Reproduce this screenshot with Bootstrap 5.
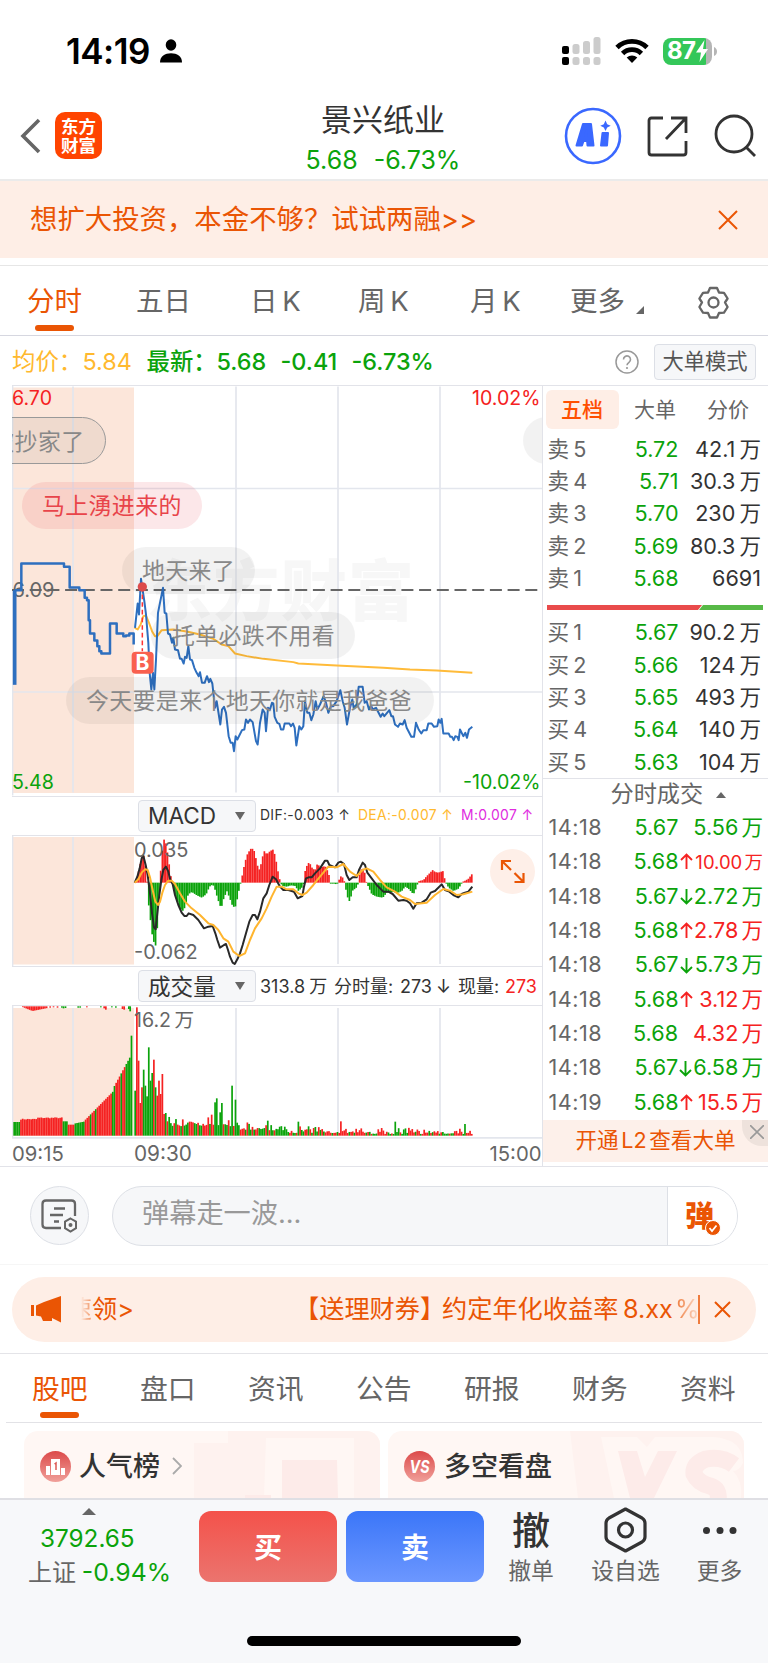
<!DOCTYPE html>
<html lang="zh-CN">
<head>
<meta charset="utf-8">
<meta name="viewport" content="width=device-width, initial-scale=1">
<title>景兴纸业</title>
<link href="https://cdn.jsdelivr.net/npm/bootstrap@5.3.0/dist/css/bootstrap.min.css" rel="stylesheet">
<style>
:root{--or:#ea5504;--gn:#0ba30b;--rd:#f52222;--ln:#e2e3e9;--tx:#333;--gy:#666;--peach:#feeee6}
body{font-family:Inter,"Noto Sans CJK SC",sans-serif;color:var(--tx);background:#fff;line-height:1;width:768px;height:1663px;overflow:hidden}
.t-or{color:var(--or)}.t-gn{color:var(--gn)}.t-rd{color:var(--rd)}.t-gy{color:var(--gy)}.t-ye{color:#ffb92e}
.nw,.nw *{white-space:nowrap}
svg{display:block;flex:none}
.statusbar{height:80px;padding:21px 51px 0 66px}
.clock{font-size:35px;font-weight:600;color:#000;letter-spacing:-.5px}
.battery{width:49px;height:27px;border-radius:8px;background:linear-gradient(90deg,#34c759 87%,#b5b5b5 87%);color:#fff;font-weight:700;font-size:24px;padding-left:4px;letter-spacing:-.5px}
.topbar{height:101px;border-bottom:2px solid #ebebeb}
.logo{width:47px;height:47px;border-radius:10px;background:#ff4400;color:#fff;font-size:17.5px;font-weight:700;line-height:19px}
.stock{font-size:31px;line-height:34px}
.quote{font-size:25px;line-height:28px}
.banner{height:77px;background:var(--peach);font-size:27.4px}
.periods{height:71px;margin-top:7px;border-top:1px solid #e6e6e6;border-bottom:1.5px solid #d6d7e0;font-size:27.5px;color:var(--gy);padding-top:3px;word-spacing:-3px}
.on{position:relative;display:inline-block;color:var(--or)}
.on::after{content:"";position:absolute;left:50%;bottom:-15px;width:39px;height:6px;margin-left:-19.5px;border-radius:3px;background:var(--or)}
.info{height:49px;font-size:23.4px;padding-top:2px}
.mode{width:102px;height:36px;border:1px solid #dcdfe6;background:#f6f7f9;border-radius:4px;font-size:21.3px;color:#555}
.market{height:782px;border-bottom:1px solid var(--ln)}
.charts{width:530.5px;margin-left:12px;border-right:1.5px solid var(--ln)}
.plot{position:relative;overflow:hidden;border-top:1.5px solid var(--ln)}
.lbl{position:absolute;font-size:19.6px;line-height:20px;word-spacing:-2px}
.bub{position:absolute;height:47px;line-height:48px;border-radius:24px;background:rgba(0,0,0,.05);color:#888;font-size:22.9px;letter-spacing:.4px;white-space:nowrap}
.subhead{height:39px;border-top:1.5px solid var(--ln);padding-left:126px}
.pick{width:118px;height:32px;border:1px solid #dcdfe6;background:#f6f7f9;border-radius:4px;font-size:22.6px;padding:0 10px 0 9px}
.tri-d{border:5px solid transparent;border-top:8px solid #666;border-bottom:0}
.tri-u{border:5.5px solid transparent;border-bottom:6.5px solid #666;border-top:0}
.depth{width:225.5px;border-top:1.5px solid var(--ln);position:relative}
.dtab{width:73px;height:39px;font-size:21px;color:var(--gy);border-radius:6px;padding-top:1px}
.dtab.act{background:var(--peach);color:#ff5000;font-weight:500}
.lv{height:32.3px;font-size:21.6px;padding:0 7px 0 5px;word-spacing:-2px}
.lv>:nth-child(1),.tk>:nth-child(1){width:60px;color:var(--gy)}
.lv>:nth-child(2){width:71px;text-align:right;color:var(--gn)}
.lv>:nth-child(3){flex:1;text-align:right}
.tk{height:34.35px;font-size:21.6px;padding:0 5px 0 6px;word-spacing:-3px}
.tk>:nth-child(1){letter-spacing:.5px}
.tk>:nth-child(2){width:70px;text-align:right;color:var(--gn)}
.tk>:nth-child(3){width:14px;margin-left:1px}
.tk>:nth-child(4){flex:1;text-align:right}
.l2{height:42px;background:#fdf0ea;font-size:21.6px;position:relative;word-spacing:-3.5px}
.l2 .shut{position:absolute;right:0;top:0;width:26px;height:26px;background:#eee2dc;border-bottom-left-radius:20px;padding:5px 0 0 8px}
.talk{height:98px;border-bottom:1.5px solid #f6f6f6}
.rnd{width:59px;height:59px;border:1px solid #dde0e6;background:#f6f7f9}
.say{width:626px;height:60px;border:1px solid #dde0e6;border-radius:30px;background:#f6f7f9;overflow:hidden;font-size:27.2px;color:#999}
.send{width:70px;border-left:1px solid #dde0e6;background:#fff;position:relative}
.notice{height:65px;border-radius:33px;background:var(--peach);font-size:25.2px;color:var(--or)}
.notice>*{flex:none}
.fadein{background:linear-gradient(90deg,#feeee6,#f08c58 100%);-webkit-background-clip:text;color:transparent}
.fadeout{background:linear-gradient(90deg,#ee7838,#fbd5c0 100%);-webkit-background-clip:text;color:transparent}
.pages{height:69px;margin:0 6px;border-bottom:1.5px solid #e2e2e6;font-size:27.8px;color:var(--gy);padding-top:3px}
.promo{width:356px;height:67px;border-radius:14px 14px 0 0;background:#fff7f4;font-size:27px;font-weight:500;position:relative;overflow:hidden;padding-top:3px}
.promo>*{position:relative}
.promo .art{position:absolute;right:0;top:0}
.dock{height:165px;background:#f7f8fa;border-top:2px solid #dfdfe4;position:relative}
.trade{width:138px;height:71px;border-radius:12px;color:#fff;font-size:28px;font-weight:600;padding-top:2px}
.cap{font-size:22.8px;color:var(--gy);line-height:27px}
.homebar{position:absolute;left:247px;top:1636px;width:274px;height:10px;border-radius:5px;background:#000}
</style>
</head>
<body class="nw">
<div class="statusbar d-flex align-items-start">
  <div class="d-flex align-items-center pt-2" style="height:52px">
    <span class="clock lh-1">14:19</span>
    <svg style="margin-left:9px" width="24" height="24" viewBox="0 0 24 24"><ellipse cx="12" cy="6" rx="5.3" ry="5.8"/><path d="M1 23.5C1 17 6 14.300 12 14.300S23 17 23 23.500z"/></svg>
  </div>
  <div class="d-flex align-items-center ms-auto pt-1" style="height:56px">
    <svg width="39" height="28" viewBox="0 0 39 28"><g><rect x="0" y="9" width="7" height="8" rx="2"/><rect x="0" y="20" width="7" height="8" rx="2"/></g><g fill="#ccc"><rect x="10.500" y="7" width="7" height="10" rx="2.500"/><rect x="21" y="4" width="7" height="13" rx="2.500"/><rect x="31.500" y="0" width="7" height="17" rx="2.500"/><rect x="10.500" y="20" width="7" height="8" rx="2.500"/><rect x="21" y="20" width="7" height="8" rx="2.500"/><rect x="31.500" y="20" width="7" height="8" rx="2.500"/></g></svg>
    <svg style="margin:0 14px" width="34" height="26" viewBox="0 0 34 26"><g fill="none" stroke="#000" stroke-width="4.800"><path d="M2 9.500a21.500 21.500 0 0 1 30 0"/><path d="M7.600 15.500a13.500 13.500 0 0 1 18.800 0"/></g><path d="M17 25l-5.300-5.600a8 8 0 0 1 10.600 0z"/></svg>
    <div class="battery d-flex align-items-center">87<svg width="12" height="22" viewBox="0 0 12 22"><path fill="#fff" d="M8.500 0L0 12.500h5L3.500 22 12 9H7z"/></svg></div>
    <svg style="margin-left:2px" width="3" height="9" viewBox="0 0 3 9"><path fill="#b5b5b5" d="M0 0q3 1.500 3 4.500T0 9z"/></svg>
  </div>
</div>

<div class="topbar d-flex align-items-center">
  <svg style="margin-left:20px;margin-top:12px" width="21" height="36" viewBox="0 0 21 36"><path d="M19 2L3 18l16 16" fill="none" stroke="#666" stroke-width="3.600"/></svg>
  <div class="logo d-flex flex-column justify-content-center text-center" style="margin:12px 0 0 14px"><span>东方</span><span>财富</span></div>
  <div class="text-center" style="width:280px;margin-left:141px;padding-top:18px">
    <div class="stock">景兴纸业</div>
    <div class="quote t-gn" style="margin-top:9px">5.68<span style="margin-left:16px">-6.73%</span></div>
  </div>
  <svg style="margin-left:41px;margin-top:12px" width="58" height="58" viewBox="0 0 58 58"><circle cx="29" cy="29" r="27" fill="#fff" stroke="#3a68ff" stroke-width="2.600"/><path fill="#3a68ff" fill-rule="evenodd" stroke="#3a68ff" stroke-width="2" stroke-linejoin="round" d="M12.500 38.500L19 17h8l2.500 21.500h-6l-.4-4.500h-3.600l-1.500 4.500zM21 29h2l-.3-6zM38.500 26h5.500l-1 12.500h-6z"/><path fill="#3a68ff" d="M41.500 13.500l1.700 3.700 3.500 1.600-3.500 1.600-1.700 3.700-1.700-3.700-3.500-1.600 3.500-1.600z"/></svg>
  <svg style="margin-left:25px;margin-top:12px" width="42" height="42" viewBox="0 0 42 42"><g fill="none" stroke="#333" stroke-width="2.800"><path d="M16 3H4.500Q2 3 2 5.500v32Q2 40 4.500 40h32q2.500 0 2.500-2.500V26"/><path d="M24 3h15v15M39 3L19 24"/></g></svg>
  <svg style="margin-left:25px;margin-top:12px" width="44" height="44" viewBox="0 0 44 44"><g fill="none" stroke="#333" stroke-width="2.800"><circle cx="20" cy="20" r="18"/><path d="M32 33l9 9"/></g></svg>
</div>

<div class="banner d-flex align-items-center justify-content-between t-or" style="padding:0 30px 0 30px"><span>想扩大投资，本金不够？试试两融&gt;&gt;</span>
  <svg width="20" height="20" viewBox="0 0 20 20"><path d="M1 1l18 18M19 1L1 19" stroke="#ea5504" stroke-width="2"/></svg></div>

<div class="periods d-flex align-items-center" style="padding-left:27px">
  <div style="width:109px"><span class="on">分时</span></div>
  <div style="width:114px">五日</div><div style="width:108px">日 K</div><div style="width:112px">周 K</div><div style="width:100px">月 K</div>
  <div style="width:127px">更多<svg class="d-inline-block align-baseline" style="margin-left:11px;margin-bottom:-3px" width="8" height="8"><path d="M8 0v8H0z" fill="#666"/></svg></div>
  <svg width="33" height="33" viewBox="0 0 33 33"><g fill="none" stroke="#666" stroke-width="2.300"><path d="M13 2h7l2 4.500 5 .3 3.600 5.700-2.600 4 2.600 4.500-3.600 5.700-5 .3-2 4.500h-7l-2-4.500-5-.3L2.400 21 5 16.500l-2.600-4L6 6.800l5-.3z" stroke-linejoin="round"/><circle cx="16.500" cy="16.500" r="5"/></g></svg>
</div>

<div class="info d-flex align-items-center" style="padding-left:12px;padding-right:12px">
  <span class="t-ye" style="width:70.500px">均价：</span><span class="t-ye" style="width:64px">5.84</span>
  <span class="t-gn" style="font-weight:500;width:70px">最新：</span><span class="t-gn" style="width:64px;font-weight:500">5.68</span><span class="t-gn" style="width:71px;font-weight:500">-0.41</span><span class="t-gn" style="font-weight:500">-6.73%</span>
  <svg class="ms-auto" style="margin-right:15px" width="24" height="24" viewBox="0 0 24 24"><circle cx="12" cy="12" r="11" fill="none" stroke="#999" stroke-width="1.500"/><path d="M8.500 9.500a3.500 3.500 0 1 1 5.500 2.800c-1.300.9-2 1.500-2 3" fill="none" stroke="#999" stroke-width="1.600"/><circle cx="12" cy="18" r="1.100" fill="#999"/></svg>
  <div class="mode d-flex align-items-center justify-content-center">大单模式</div>
</div>

<div class="market d-flex">
  <div class="charts">
    <div class="plot" style="height:411px">
      <svg width="530" height="410" viewBox="12 386.500 530 410">
        <text x="146" y="615" font-size="66" font-weight="900" fill="#f7f7f7" textLength="268">东方财富</text>
        <rect x="12" y="388" width="122" height="405.500" fill="#fce6da"/>
        <g stroke="#e3e6ed" stroke-width="1.700"><path d="M12.500 386v410M73 387v406M236 387v406M338 387v406M440 387v406M12 489h530M12 692.500h530"/></g>
        <path d="M12 590.500h530" stroke="#666" stroke-width="1.900" stroke-dasharray="12 5.700"/>
        <text x="12.500" y="597" font-size="20" fill="#666">6.09</text>
        <g transform="translate(0 380) scale(.33333)" fill="none" stroke-linejoin="round">
          <path stroke="#2e6fbf" stroke-width="11" d="M44 632V916"/>
          <path stroke="#2e6fbf" stroke-width="7.500" d="M44 632H64V552H192V562H209V624H238V632H254V655H261V662H266V722H270V762H283V783H292V800H298V815H304V822H330V732H350V762H370V770H378V768H388V762H401V795"/>
          <path stroke="#ffbb3a" stroke-width="5.800" d="M404 745L413 750 422 735 430 710 438 708 447 730 456 755 465 770 472 770 485 752 520 750 560 756 600 765 640 778 665 795 685 800 705 822 740 830 790 838 880 848 895 852 1010 858 1150 865 1230 870 1310 873 1417 880"/>
          <path stroke="#2e6fbf" stroke-width="6" d="M405 745L413 672 417 705 423 598 433 665 438 705 445 790 449 880 454 930 459 880 463 930 468 840 474 700 481 665 489 625 494 700 499 702 504 762 510 765 516 790 520 775 525 810 534 812 540 838 545 838 551 852 555 832 560 835 565 800 570 840 576 842 583 865 590 880 596 890 600 878 606 910 614 910 621 890 627 908 631 898 637 912 645 985 650 965 661 1035 666 990 672 982 678 1000 686 1070 692 1090 698 1090 702 1115 707 1070 712 1080 726 1052 733 1050 738 1020 744 1030 750 1020 758 1028 768 1085 773 1095 780 1030 788 990 794 1000 798 1055 804 985 810 990 816 970 820 972 824 1012 832 1030 838 1033 843 1050 850 1050 854 1032 868 1032 873 1040 879 1032 884 1045 889 1098 898 1040 904 1050 910 1040 915 965 922 1000 928 1000 934 1022 940 1005 947 965 952 990 960 975 971 950 978 970 985 1000 993 980 1000 980 1010 965 1021 932 1028 965 1034 985 1041 1035 1050 985 1057 960 1061 985 1070 975 1076 922 1088 922 1094 970 1100 965 1107 990 1113 978 1118 990 1128 985 1142 1012 1148 1002 1153 1010 1168 992 1174 1010 1179 1010 1185 1035 1194 1042 1200 1032 1208 1035 1214 1022 1220 1045 1234 1072 1242 1072 1248 1030 1256 1050 1264 1062 1270 1052 1280 1052 1285 1032 1295 1032 1302 1042 1312 1040 1316 1020 1321 1030 1325 1018 1330 1062 1346 1062 1351 1072 1356 1072 1361 1082 1366 1070 1372 1072 1376 1082 1380 1050 1390 1070 1396 1060 1401 1075 1407 1050 1417 1042"/>
          <path stroke="#f33" stroke-width="4.500" stroke-dasharray="14 9" d="M427 622V815"/>
          <circle cx="427" cy="622" r="14" fill="#e85050"/>
          <rect x="395" y="817" width="66" height="66" rx="12" fill="#f9604f"/>
        </g>
        <text x="142.500" y="670.500" font-size="21" font-weight="700" fill="#fff" text-anchor="middle">B</text>
      </svg>
      <div class="lbl t-rd" style="left:0;top:2px">6.70</div><div class="lbl t-rd" style="right:1px;top:2px">10.02%</div>
      <div class="lbl t-gn" style="left:0;bottom:4px">5.48</div><div class="lbl t-gn" style="right:1px;bottom:4px">-10.02%</div>
      <div class="bub" style="right:436px;top:31px;padding:0 20px;border:1px solid #999">被抄家了</div>
      <div class="bub" style="left:10px;top:96px;padding:0 20px;background:rgba(232,60,70,.12);color:#e8444a">马上湧进来的</div>
      <div class="bub" style="left:110px;top:161px;width:133px;padding-left:20px">地天来了</div>
      <div class="bub" style="left:139px;top:226px;width:204px;padding-left:21px">托单必跌不用看</div>
      <div class="bub" style="left:54px;top:291px;width:368px;padding-left:20px">今天要是来个地天你就是我爸爸</div>
      <div class="bub" style="left:511px;top:31px;width:60px"></div>
    </div>
    <div class="subhead d-flex align-items-center">
      <div class="pick d-flex align-items-center justify-content-between"><span>MACD</span><i class="tri-d"></i></div>
      <div class="d-flex" style="font-size:13.900px;margin-left:4px;letter-spacing:.35px"><span style="width:98px">DIF:-0.003 ↑</span><span class="t-ye" style="width:103px">DEA:-0.007 ↑</span><span style="color:#e02be0">M:0.007 ↑</span></div>
    </div>
    <div class="plot" style="height:131px">
      <svg width="530" height="130" viewBox="12 836 530 130">
        <rect x="12" y="837" width="122" height="127.500" fill="#fce6da"/>
        <path stroke="#e3e6ed" stroke-width="1.700" d="M12.500 836v130M73 837v127M236 837v127M338 837v127M440 837v127"/>
        <g transform="translate(0 790) scale(.33333)" fill="none" stroke-linejoin="round">
          <g id="hist"></g>
          <path stroke="#292929" stroke-width="6" d="M404 278L412 260 419 235 425 205 430 197 437 225 443 255 450 310 456 370 462 412 467 418 472 370 478 315 484 270 490 240 498 230 505 245 511 270 518 282 525 315 535 345 545 368 553 378 560 378 566 370 580 375 595 390 612 415 625 410 638 408 646 430 652 450 660 473 672 465 678 462 684 480 690 500 698 518 704 522 712 508 720 490 728 465 738 430 748 395 758 375 765 375 772 388 780 365 790 325 800 310 808 285 818 260 828 268 840 290 850 300 865 300 882 305 893 325 907 318 912 290 918 265 926 262 935 262 945 250 960 235 975 212 982 212 988 225 1005 232 1015 218 1022 215 1032 222 1040 255 1048 270 1058 262 1070 262 1077 240 1088 218 1095 225 1102 248 1115 265 1130 285 1150 305 1165 305 1178 312 1195 332 1210 330 1220 332 1230 340 1240 356 1250 340 1265 338 1280 328 1292 308 1305 303 1325 283 1335 300 1348 305 1360 315 1375 322 1385 312 1395 308 1405 305 1417 290"/>
          <path stroke="#ffb52e" stroke-width="6" d="M404 278L415 268 425 248 435 238 443 240 450 262 458 300 466 335 474 345 480 335 487 308 495 285 505 272 515 272 525 282 540 310 555 335 575 355 600 375 625 400 640 405 655 420 670 445 685 455 700 485 718 498 735 490 750 450 765 415 785 385 800 355 815 320 830 290 845 290 860 298 880 298 895 310 907 315 920 308 940 285 960 260 985 230 1010 232 1030 222 1050 245 1070 258 1088 240 1100 235 1120 245 1140 270 1160 292 1185 305 1205 320 1230 330 1245 342 1280 338 1305 315 1330 297 1350 302 1370 315 1390 313 1417 305"/>
        </g>
      </svg>
      <div class="lbl t-gy" style="left:122px;top:4px;font-size:20px">0.035</div><div class="lbl t-gy" style="left:122px;top:106px;font-size:20px">-0.062</div>
      <svg class="position-absolute" style="left:478px;top:13px" width="45" height="45" viewBox="0 0 45 45"><circle cx="22.500" cy="22.500" r="22.500" fill="#feefe8"/><path d="M12 21v-9h9M12.500 12.500l8.500 8.500M24.500 33h9v-9M33 32.500L24.500 24" fill="none" stroke="#ea5504" stroke-width="2.200"/></svg>
    </div>
    <div class="subhead d-flex align-items-center">
      <div class="pick d-flex align-items-center justify-content-between"><span style="padding-top:2px">成交量</span><i class="tri-d"></i></div>
      <div class="d-flex" style="font-size:18px;margin-left:4px;padding-top:1px;word-spacing:-1px"><span style="width:74px">313.8 万</span><span style="width:66px">分时量:</span><span style="width:58px">273 ↓</span><span style="width:47px">现量:</span><span class="t-rd">273</span></div>
    </div>
    <div class="plot" style="height:162px">
      <svg width="530" height="160" viewBox="12 1006 530 160">
        <rect x="12" y="1008" width="122" height="128" fill="#fce6da"/>
        <path stroke="#e3e6ed" stroke-width="1.700" d="M12.500 1006v132M73 1008v128M236 1008v128M338 1008v128M440 1008v128M12 1137.800h530"/>
        <g id="vol" transform="translate(0 790) scale(.33333)"></g>
      </svg>
      <div class="lbl t-gy" style="left:122px;top:4px">16.2 万</div>
      <div class="lbl t-gy" style="left:0;top:138px;font-size:20.300px">09:15</div><div class="lbl t-gy" style="left:122px;top:138px;font-size:20.800px">09:30</div><div class="lbl t-gy" style="right:0;top:138px;font-size:20.300px">15:00</div>
    </div>
  </div>

  <div class="depth">
    <div class="d-flex" style="padding:3.500px 0 0 3px"><div class="dtab act d-flex align-items-center justify-content-center">五档</div><div class="dtab d-flex align-items-center justify-content-center">大单</div><div class="dtab d-flex align-items-center justify-content-center">分价</div></div>
    <div style="margin-top:5px">
      <div class="lv d-flex align-items-center"><span>卖 5</span><span>5.72</span><span>42.1 万</span></div>
      <div class="lv d-flex align-items-center"><span>卖 4</span><span>5.71</span><span>30.3 万</span></div>
      <div class="lv d-flex align-items-center"><span>卖 3</span><span>5.70</span><span>230 万</span></div>
      <div class="lv d-flex align-items-center"><span>卖 2</span><span>5.69</span><span>80.3 万</span></div>
      <div class="lv d-flex align-items-center"><span>卖 1</span><span>5.68</span><span>6691</span></div>
    </div>
    <svg style="margin:10px 0 7px 4px" width="216" height="5"><path fill="#e94b4b" d="M0 0h155l-4 5H0z"/><path fill="#57b947" d="M156 0h60v5h-64z"/></svg>
    <div>
      <div class="lv d-flex align-items-center"><span>买 1</span><span>5.67</span><span>90.2 万</span></div>
      <div class="lv d-flex align-items-center"><span>买 2</span><span>5.66</span><span>124 万</span></div>
      <div class="lv d-flex align-items-center"><span>买 3</span><span>5.65</span><span>493 万</span></div>
      <div class="lv d-flex align-items-center"><span>买 4</span><span>5.64</span><span>140 万</span></div>
      <div class="lv d-flex align-items-center"><span>买 5</span><span>5.63</span><span>104 万</span></div>
    </div>
    <div class="d-flex align-items-center t-gy" style="height:32px;border-top:1.500px solid var(--ln);padding-left:68px;font-size:23.200px">分时成交<i class="tri-u" style="margin-left:13px"></i></div>
    <div>
      <div class="tk d-flex align-items-center"><span>14:18</span><span>5.67</span><span></span><span class="t-gn">5.56 万</span></div>
      <div class="tk d-flex align-items-center"><span>14:18</span><span>5.68</span><span class="t-rd ar">u</span><span class="t-rd" style="font-size:18.500px">10.00 万</span></div>
      <div class="tk d-flex align-items-center"><span>14:18</span><span>5.67</span><span class="t-gn ar">d</span><span class="t-gn">2.72 万</span></div>
      <div class="tk d-flex align-items-center"><span>14:18</span><span>5.68</span><span class="t-rd ar">u</span><span class="t-rd">2.78 万</span></div>
      <div class="tk d-flex align-items-center"><span>14:18</span><span>5.67</span><span class="t-gn ar">d</span><span class="t-gn">5.73 万</span></div>
      <div class="tk d-flex align-items-center"><span>14:18</span><span>5.68</span><span class="t-rd ar">u</span><span class="t-rd">3.12 万</span></div>
      <div class="tk d-flex align-items-center"><span>14:18</span><span>5.68</span><span></span><span class="t-rd">4.32 万</span></div>
      <div class="tk d-flex align-items-center"><span>14:18</span><span>5.67</span><span class="t-gn ar">d</span><span class="t-gn">6.58 万</span></div>
      <div class="tk d-flex align-items-center"><span>14:19</span><span>5.68</span><span class="t-rd ar">u</span><span class="t-rd">15.5 万</span></div>
    </div>
    <div class="l2 d-flex align-items-center t-or" style="padding-left:33px">开通 L2 查看大单
      <div class="shut"><svg width="14" height="14" viewBox="0 0 14 14"><path d="M0 0l14 14M14 0L0 14" stroke="#999" stroke-width="1.600"/></svg></div></div>
  </div>
</div>

<div class="talk d-flex align-items-center" style="padding-left:30px">
  <div class="rnd rounded-circle d-flex align-items-center justify-content-center"><svg width="37" height="34" viewBox="0 0 37 34"><g fill="none" stroke="#666" stroke-width="2.300"><path d="M20 29H5q-3.500 0-3.500-3.500V5Q1.500 1.500 5 1.500h25.500Q34 1.500 34 5v12"/><path d="M13 9.500h11M9 16h13M13 22.500h5"/><path d="M29.500 19.500l5.500 3.200v6.500l-5.500 3.300-5.500-3.300v-6.500z" stroke-width="2"/></g><circle cx="29.500" cy="26" r="2" fill="#666"/></svg></div>
  <div class="say d-flex align-items-stretch" style="margin-left:23px"><span class="flex-grow-1" style="padding:13px 0 0 29px">弹幕走一波...</span>
    <div class="send"><span class="t-or" style="position:absolute;left:17px;top:15px;font-size:29px;font-weight:900">弹</span><svg class="position-absolute" style="left:37px;top:33px" width="16" height="16" viewBox="0 0 16 16"><circle cx="8" cy="8" r="7.500" fill="#ea5504" stroke="#fff"/><path d="M4.500 8l2.500 3 4.500-5.500" fill="none" stroke="#fff" stroke-width="1.800"/></svg></div></div>
</div>

<div style="height:89px;padding:12px 12px 0;border-bottom:1.500px solid #e4e4e8">
  <div class="notice d-flex align-items-center">
    <svg style="margin-left:19px" width="31" height="27" viewBox="0 0 31 27"><path fill="#ea5504" d="M0 9h3v11H0zM5 9.500L13 6 30 0v26.500l-9-4.500v3h-9l-2-4.500-5-1z"/></svg>
    <span class="fadein overflow-hidden d-flex justify-content-end" style="width:11px;margin-left:19px">速</span><span style="width:202px">领&gt;</span>
    <span style="width:148px">【送理财券】</span><span style="width:181px">约定年化收益率</span><span style="width:52px">8.xx</span><span class="fadeout" style="width:22px">%</span>
    <svg style="margin-left:1px" width="2" height="29"><path d="M1 0v29" stroke="#ea5504" stroke-width="1.500"/></svg>
    <svg style="margin-left:14px" width="17" height="17" viewBox="0 0 17 17"><path d="M1 1l15 15M16 1L1 16" stroke="#ea5504" stroke-width="2"/></svg>
  </div>
</div>

<div class="pages d-flex align-items-center" style="padding-left:26px">
  <div style="width:108px"><span class="on">股吧</span></div><div style="width:108px">盘口</div><div style="width:108px">资讯</div><div style="width:108px">公告</div><div style="width:108px">研报</div><div style="width:108px">财务</div><div>资料</div>
</div>

<div class="d-flex" style="height:75px;padding:8px 24px 0;gap:8px">
  <div class="promo d-flex align-items-center" style="padding-left:16px">
    <svg class="art" width="190" height="67" viewBox="0 0 190 67"><path fill="#fef2ef" d="M4 12h34V0h152v67H4z"/><path fill="#fff7f4" d="M76 7h88v60H74z"/><path fill="#fdebe9" d="M92 29h55l1 38H92zM55 64h26v3H55z"/></svg>
    <svg width="31" height="31" viewBox="0 0 31 31"><defs><linearGradient id="rg" x2="0" y2="1"><stop stop-color="#dc4a4a"/><stop offset="1" stop-color="#f0a09a"/></linearGradient></defs><circle cx="15.500" cy="15.500" r="15.500" fill="url(#rg)"/><path fill="#fff" d="M6 15h4v9H6zM11 8h9v16h-9zM21 17h4v7h-4z"/><path d="M14.500 13l1.500-1v7" fill="none" stroke="#dc5a55" stroke-width="1.500"/></svg>
    <span style="margin-left:8px">人气榜</span><svg style="margin-left:12px" width="10" height="20" viewBox="0 0 10 20"><path d="M1 2l8 8-8 8" fill="none" stroke="#aaa" stroke-width="1.800"/></svg>
  </div>
  <div class="promo d-flex align-items-center" style="padding-left:16px">
    <svg class="art" width="174" height="67" viewBox="0 0 174 67"><path fill="#fef2ef" d="M0 0h174v67H8z"/><path fill="#fff7f4" d="M31 6h36l10 10 8-10h58q30 2 30 26-4 8-10 8 10 10 8 27H44z"/><path fill="#fdebe9" d="M48 20h19l8 26 13-26h19L84 67H60z"/><path fill="none" stroke="#fdebe9" stroke-width="17" d="M164 34q-12-9-28-6-13 5-12 15 4 9 16 12 10 3 8 14"/></svg>
    <svg width="31" height="31" viewBox="0 0 31 31"><circle cx="15.500" cy="15.500" r="15.500" fill="url(#rg)"/><text x="5.500" y="22" font-size="18" font-weight="700" font-style="italic" fill="#fff" textLength="20" lengthAdjust="spacingAndGlyphs">VS</text></svg>
    <span style="margin-left:9px">多空看盘</span>
  </div>
</div>

<div class="dock d-flex align-items-start">
  <div class="text-center" style="width:171px;padding:8px 0 0 28px;margin-right:28px">
    <div class="d-flex justify-content-center" style="margin-right:22px"><i class="tri-u" style="border-width:0 7px 7px"></i></div>
    <div class="t-gn text-start" style="font-size:24.300px;line-height:28px;margin:9px 0 0 12px">3792.65</div>
    <div class="text-start d-flex" style="font-size:24.800px;line-height:28px;margin-top:6px"><span class="t-gy" style="width:54px;font-size:24px;padding-top:1px">上证</span><span class="t-gn">-0.94%</span></div>
  </div>
  <div class="trade d-flex align-items-center justify-content-center" style="margin-top:11px;background:linear-gradient(#f4524b,#eb746e)">买</div>
  <div class="trade d-flex align-items-center justify-content-center" style="margin:11px 0 0 9px;background:linear-gradient(#3b76f8,#6c97ff)">卖</div>
  <div class="text-center" style="width:94px"><div style="font-size:38px;font-weight:500;height:57px;padding-top:11px">撤</div><div class="cap">撤单</div></div>
  <div class="text-center" style="width:95px"><div class="d-flex justify-content-center" style="height:57px;padding-top:7px"><svg width="43" height="46" viewBox="0 0 43 46"><g fill="none" stroke="#333" stroke-width="3.200"><path stroke-linejoin="round" d="M21.500 2L38 11q3 2 3 5v14q0 3-3 5l-16.500 9L5 35q-3-2-3-5V16q0-3 3-5z"/><circle cx="21.500" cy="23" r="7"/></g></svg></div><div class="cap">设自选</div></div>
  <div class="text-center" style="width:95px;margin-left:-1px"><div class="d-flex justify-content-center" style="height:57px;padding-top:27px"><svg width="34" height="7"><circle cx="3.500" cy="3.500" r="3.500" fill="#333"/><circle cx="17" cy="3.500" r="3.500" fill="#333"/><circle cx="30" cy="3.500" r="3.500" fill="#333"/></svg></div><div class="cap">更多</div></div>
</div>
<div class="homebar"></div>

<script src="https://cdn.jsdelivr.net/npm/bootstrap@5.3.0/dist/js/bootstrap.bundle.min.js"></script>
<script>
const RED='#f52222', GREEN='#0ba30b';
// tick direction arrows
document.querySelectorAll('.ar').forEach(e=>{
  const up=e.textContent==='u';
  e.innerHTML='<svg width="13" height="17" viewBox="0 0 13 17"><path fill="none" stroke="currentColor" stroke-width="1.9" d="'+(up?'M6.500 16V2M1 7l5.500-5.500L12 7':'M6.500 1v14M1 10l5.500 5.500L12 10')+'"/></svg>';
});
const bar=(x,y,h,c)=>`<rect x="${x}" y="${y}" width="5.100" height="${h}" fill="${c}"/>`;
// MACD histogram, interpolated between turning points
const m=[405,3,412,20,420,55,428,90,433,70,437,40,441,0,443,-45,449,-95,455,-150,460,-175,466,-190,470,-160,475,-70,479,-5,481,30,486,90,490,132,496,122,502,90,507,55,512,20,516,0,520,-15,527,-45,535,-65,542,-80,549,-85,556,-70,564,-35,575,-28,590,-38,605,-45,618,-35,628,-12,638,-5,645,-22,653,-50,663,-78,670,-50,680,-25,690,-50,697,-70,705,-75,711,-50,718,-15,722,0,726,20,733,55,740,82,750,100,755,104,762,95,768,70,775,38,780,42,785,70,792,95,800,85,810,95,820,100,827,70,835,25,841,0,846,-10,860,-12,872,-8,885,-10,895,-25,905,-15,912,0,915,35,920,50,927,62,937,42,945,38,952,58,960,45,975,50,985,30,991,0,1010,-5,1014,0,1018,12,1024,22,1030,10,1034,0,1038,-25,1045,-55,1050,-55,1056,-25,1065,-18,1072,-12,1074,0,1077,20,1085,45,1092,38,1099,0,1106,-15,1115,-35,1130,-42,1148,-45,1160,-30,1180,-28,1190,-32,1205,-25,1215,-12,1225,-18,1240,-35,1250,-12,1253,0,1257,5,1270,8,1280,20,1290,30,1297,38,1305,32,1315,30,1328,35,1334,10,1338,0,1345,-15,1360,-25,1375,-18,1383,-5,1386,2,1395,6,1405,12,1417,28];
let s='',k=0;
for(let x=405;x<=1417;x+=5.1){while(k+4<m.length&&m[k+2]<x)k+=2;
  const v=m[k+1]+(m[k+3]-m[k+1])*(x-m[k])/(m[k+2]-m[k]);
  s+=v>0?bar(x-2,278-v,v,RED):bar(x-2,278,Math.max(-v,3),GREEN);}
hist.innerHTML=s;
// volume bars: auction session, then trading session
let q=7;const rnd=()=>(q=(q*16807)%2147483647)/2147483647;
s='';
for(let x=39;x<396;x+=5.1){let h,c=RED;
  if(x<55){h=41;c=GREEN}else if(x<183)h=48+(x>110?4:0)+rnd()*3;
  else if(x<200){h=43;c=GREEN}else if(x<218)h=33;
  else if(x<250){h=36+(x-218)*.2;c=GREEN}
  else if(x<335)h=45+(x-250)*1.02;
  else h=140+(x-335)*1.85;
  if((x>268&&x<273)||(x>281&&x<286)||(x>333&&x<341)||(x>358&&x<364)||x>375)c=GREEN;
  if(x>389)h=300;
  s+=bar(x+1,1037-h,h,c);}
const first=[135,1,385,0,225,0,98,0,145,0,198,1,150,1,118,1,265,1,165,1,188,1,228,0,145,1,120,0,165,0,125,0,185,0,65,0,68,1];
const peak={632:[63,0],643:[100,1],648:[112,1],658:[70,1],663:[98,1],694:[150,1],704:[108,1],800:[45,1],892:[42,1],1018:[43,0],1185:[42,1],1393:[35,1]};
let i=0;
for(let x=403;x<1417;x+=5.1,i++){let h,g;
  if(i*2<first.length){h=first[i*2];g=first[i*2+1]}
  else{const b=x<710?28:x<850?16:x<1100?8:5;h=b+rnd()*rnd()*(x<710?34:24);g=rnd()<.5;
    for(const p in peak)if(Math.abs(x-p)<=2.55)[h,g]=peak[p];}
  s+=bar(x,1037-h,h,g?GREEN:RED);}
for(let x=66;x<140;x+=5.1)s+=bar(x,649,x<95?(x-60)*.4:14-(x-95)*.2,RED);
for(const [x,h,g] of [[148,4,0],[158,3,0],[170,4,0],[183,4,1],[188,6,1],[194,5,1],[232,4,1],[238,4,1],[258,3,0],[300,3,1],[310,6,0],[315,10,0],[333,3,1],[345,4,1],[365,8,0],[370,10,0],[384,8,1],[388,15,1]])s+=bar(x,649,h,g?GREEN:RED);
vol.innerHTML=s;
</script>
</body>
</html>
